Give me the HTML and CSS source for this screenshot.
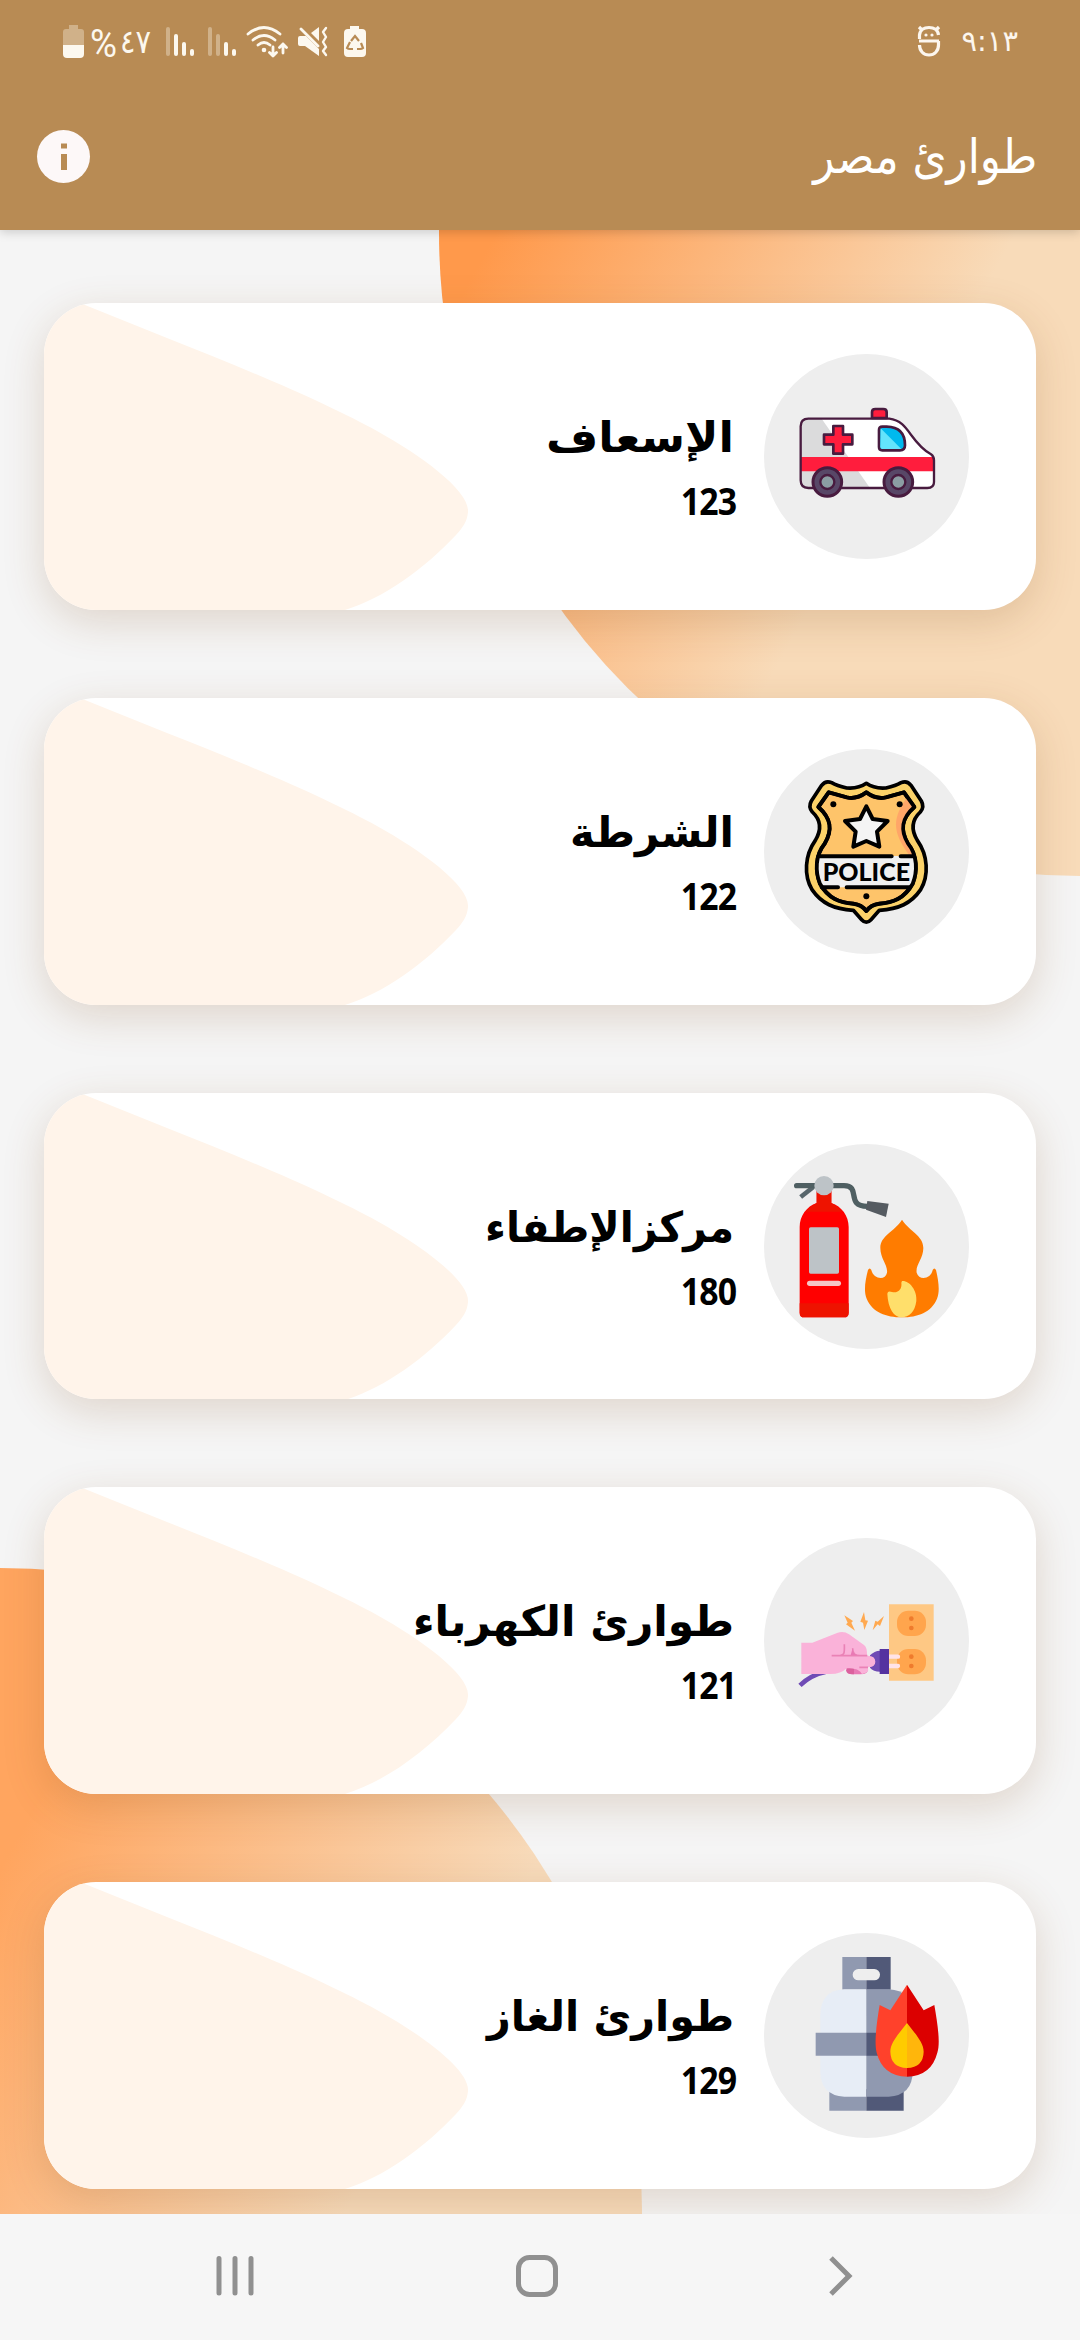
FILE: index.html
```html
<!DOCTYPE html>
<html lang="ar" dir="rtl">
<head>
<meta charset="utf-8">
<title>طوارئ مصر</title>
<link rel="stylesheet" href="styles.css">
</head>
<body>
<div class="screen">
  <header class="top">
    <div class="status">
      <div class="status-side">
        <span class="clock">٩:١٣</span>
        <svg class="face" width="24" height="32" viewBox="0 0 24 32" fill="none" stroke="#fcf6ee" stroke-width="3.2"><path d="M2.5 14V10C3 5 7 2.5 12 2.5s9 2.500 9.500 7.500M2 16h20M2.500 20c0 6 4 10 9.500 10s9.500-4 9.500-10v-4M2 2l4 4M22 2l-4 4"/><g fill="#fcf6ee" stroke="none"><circle cx="9" cy="10" r="1.600"/><circle cx="15" cy="10" r="1.600"/></g></svg>
      </div>
      <svg class="indicators" width="310" height="60" viewBox="60 11 310 60">
        <g fill="#fcf8ef">
          <path opacity=".35" d="M69 25h9v4h3q3 0 3 3v13H63V32q0-3 3-3h3z"/>
          <path d="M63 45h21v9q0 4-4 4H67q-4 0-4-4z"/>
          <rect opacity=".35" x="166" y="27" width="4" height="29" rx="2"/><rect x="174" y="34" width="4" height="22" rx="2"/><rect x="182" y="42" width="4" height="14" rx="2"/><rect x="190" y="49" width="4" height="7" rx="2"/>
          <rect opacity=".35" x="208" y="27" width="4" height="29" rx="2"/><rect opacity=".35" x="216" y="34" width="4" height="22" rx="2"/><rect x="224" y="42" width="4" height="14" rx="2"/><rect x="232" y="49" width="4" height="7" rx="2"/>
          <circle cx="264" cy="50" r="2.300"/>
          <path d="M298 38q0-2 2-2h6l13 13v7L305 46h-5q-2 0-2-2zM311 33l8-6v14z"/>
          <path d="M350 26h9v3h3q4 0 4 4v20q0 4-4 4h-14q-4 0-4-4V33q0-4 4-4h2z"/>
        </g>
        <g fill="none" stroke="#fcf8ef" stroke-width="2.800" stroke-linecap="round" stroke-linejoin="round">
          <path d="M248 34q16-13 32 0M253 40q11-9 22 0M258 45q6-5 12 0M273 47v9M269.500 52.500l3.500 3.500 3.500-3.500M283 53v-9M279.500 47.500l3.500-3.500 3.500 3.500M301 29l17 17"/>
          <path stroke-width="2.400" d="M326 28l-3 4 3 5-3 5 3 5-3 4 3 4"/>
        </g>
        <g fill="none" stroke="#b88b54" stroke-width="2.200"><path d="M351 41l4-5 4 5M361 43l2 5q-1 1-3 1h-3M353 49h-3q-2 0-3-1l3-6"/></g>
        <text class="percent" x="90" y="57" direction="ltr" textLength="27" lengthAdjust="spacingAndGlyphs">%</text>
        <text class="battery-text" x="120" y="53" direction="ltr" textLength="31" lengthAdjust="spacingAndGlyphs">٤٧</text>
      </svg>
    </div>
    <div class="bar">
      <h1 class="title">طوارئ مصر</h1>
      <svg class="info" width="53" height="53" viewBox="0 0 53 53"><circle cx="26.500" cy="26.500" r="26.500" fill="#fdf8f8"/><path fill="#b88b54" d="M24 13.500h6v5h-6zM24 24h6v16h-6z"/></svg>
    </div>
  </header>

  <main class="content">
    <svg class="backdrop" width="1080" height="1984" viewBox="0 230 1080 1984">
      <defs>
        <linearGradient id="warm-top" gradientUnits="userSpaceOnUse" x1="480" y1="262" x2="879" y2="482"><stop stop-color="#ff994b"/><stop offset="1" stop-color="#f8dbb9"/></linearGradient>
        <linearGradient id="warm-bottom" gradientUnits="userSpaceOnUse" x1="0" y1="1870" x2="410" y2="2096"><stop stop-color="#ffa55f"/><stop offset="1" stop-color="#f7dbbb"/></linearGradient>
      </defs>
      <circle cx="1082" cy="233" r="643" fill="url(#warm-top)"/>
      <circle cx="0" cy="2210" r="642" fill="url(#warm-bottom)"/>
    </svg>

    <section class="card">
      <svg class="petal" width="428" height="307" viewBox="0 0 428 307"><path d="M0 0H36L123 35C210 69 288 103 333 128C378 153 426 188 424 209C423 219 419 224 412 232C380 266 340 295 301 307H0z"/></svg>
      <div class="badge"><svg width="205" height="205" viewBox="72 71 615 615">
        <path d="M205 265H448C508 272 508 335 573 372Q582 378 582 390V455Q582 473 562 473H205Q182 473 182 450V288Q182 265 205 265z" fill="#fff"/>
        <path d="M205 265H245L390 473H205Q182 473 182 450V288Q182 265 205 265z" fill="#dbdbdc"/>
        <path d="M182 380H582V423H182z" fill="#ff1d3d"/>
        <path d="M205 265H448C508 272 508 335 573 372Q582 378 582 390V455Q582 473 562 473H205Q182 473 182 450V288Q182 265 205 265z" fill="none" stroke="#481b3f" stroke-width="7"/>
        <g stroke="#481b3f" stroke-width="8" stroke-linejoin="round"><path d="M396 263V245Q396 236 406 236H430Q440 236 440 245V263z" fill="#ff1d3d"/>
        <path d="M280 287H309V313H337V342H309V370H280V342H252V313H280z" fill="#ff1d3d"/>
        <path d="M427 289H440Q495 290 495 345Q495 360 480 360H427Q417 360 417 350V299Q417 289 427 289z" fill="#00b9ee"/></g>
        <path d="M422 294L484 356H427Q421 356 421 350z" fill="#63e4fc"/>
        <g fill="#584767" stroke="#481b3f" stroke-width="9"><circle cx="262" cy="455" r="43"/><circle cx="475" cy="455" r="43"/></g>
        <g fill="#8b9da3" stroke="#481b3f" stroke-width="7"><circle cx="262" cy="455" r="21"/><circle cx="475" cy="455" r="21"/></g>
      </svg></div>
      <div class="labels"><h2 class="name"><svg width="196" height="62"><text x="194" y="42" textLength="188" lengthAdjust="spacingAndGlyphs">الإسعاف</text></svg></h2><p class="number">123</p></div>
    </section>

    <section class="card">
      <svg class="petal" width="428" height="307" viewBox="0 0 428 307"><path d="M0 0H36L123 35C210 69 288 103 333 128C378 153 426 188 424 209C423 219 419 224 412 232C380 266 340 295 301 307H0z"/></svg>
      <div class="badge"><svg width="205" height="205" viewBox="72 56 615 615">
        <defs><clipPath id="shield"><path id="inner" d="M379 186Q350 208 320 201L266 186L235 230C275 265 278 300 254 340C225 375 226 425 240 460C265 505 300 517 340 520Q365 523 379 542Q393 523 418 520C458 517 493 505 518 460C532 425 533 375 504 340C480 300 483 265 523 230L492 186L438 201Q408 208 379 186z"/></clipPath></defs>
        <path d="M379 159Q355 176 320 173Q290 166 275 157Q257 149 245 165L214 212Q204 230 217 245C244 270 244 300 226 330C194 375 191 435 216 478C245 520 282 536 340 540L365 568Q379 583 393 568L418 540C476 536 513 520 542 478C567 435 564 375 532 330C514 300 514 270 541 245Q554 230 544 212L513 165Q501 149 483 157Q468 166 438 173Q403 176 379 159z" fill="#fbd269" stroke="#000" stroke-width="11" stroke-linejoin="round"/>
        <use href="#inner" fill="#fec46a" stroke="#000" stroke-width="12" stroke-linejoin="round"/>
        <g clip-path="url(#shield)"><path d="M510 190C450 265 455 310 520 390H540V190z" fill="#ffa668"/><path d="M230 377H530V471H230z" fill="#f0f0f0"/></g>
        <use href="#inner" fill="none" stroke="#000" stroke-width="11" stroke-linejoin="round"/>
        <path d="M235 378H455M482 378H520M245 471H294M320 471H510" stroke="#000" stroke-width="12" stroke-linecap="round"/>
        <path d="M379 228L398 266L443 272L411 304L418 349L379 332L340 349L347 304L315 272L360 266z" fill="#f4f4f4" stroke="#000" stroke-width="12" stroke-linejoin="round"/>
        <circle cx="280" cy="222" r="9"/><circle cx="479" cy="222" r="9"/><circle cx="379" cy="498" r="9"/>
        <text class="police" x="248" y="451" direction="ltr" textLength="262" lengthAdjust="spacingAndGlyphs">POLICE</text>
      </svg></div>
      <div class="labels"><h2 class="name"><svg width="176" height="62"><text x="174" y="42" textLength="164" lengthAdjust="spacingAndGlyphs">الشرطة</text></svg></h2><p class="number">122</p></div>
    </section>

    <section class="card">
      <svg class="petal" width="428" height="307" viewBox="0 0 428 307"><path d="M0 0H36L123 35C210 69 288 103 333 128C378 153 426 188 424 209C423 219 419 224 412 232C380 266 340 295 301 307H0z"/></svg>
      <div class="badge"><svg width="205" height="205" viewBox="72 71 615 615">
        <path d="M182 230L220 200" stroke="#58666b" stroke-width="14"/><path d="M170 196H312C365 197 315 258 382 258" fill="none" stroke="#4f5f62" stroke-width="16" stroke-linecap="round"/>
        <path d="M382 242L446 250L438 290L378 268z" fill="#555b61"/>
        <path d="M230 210H274V248C305 258 326 287 326 320V577Q326 591 312 591H192Q179 591 179 577V320C179 287 200 258 230 248z" fill="red"/>
        <path d="M230 210H274V248Q290 255 306 274H198Q214 255 230 248zM179 549H326V577Q326 591 312 591H192Q179 591 179 577z" fill="#ee1300"/>
        <circle cx="252" cy="196" r="29" fill="#bdc3c7"/><rect x="207" y="321" width="90" height="139" rx="5" fill="#bdc3c7"/><rect x="201" y="481" width="102" height="16" rx="8" fill="#f5c6c6"/>
        <path d="M486 298C510 335 550 345 550 383C550 415 526 434 530 457C537 482 573 476 578 449Q583 440 588 449C596 482 600 515 591 535C574 576 533 591 486 591C439 591 397 576 380 535C371 515 375 482 384 449Q389 440 394 449C400 476 436 482 441 457C444 434 421 415 421 383C421 345 463 335 486 298z" fill="#ff7c00"/>
        <path d="M486 482C508 480 532 510 529 542C525 575 507 591 485 591C462 591 444 565 442 520Q443 510 456 515C475 519 487 506 484 487z" fill="#ffdf6b"/>
      </svg></div>
      <div class="labels"><h2 class="name"><svg width="260" height="62"><text x="258" y="42" textLength="249" lengthAdjust="spacingAndGlyphs">مركزالإطفاء</text></svg></h2><p class="number">180</p></div>
    </section>

    <section class="card">
      <svg class="petal" width="428" height="307" viewBox="0 0 428 307"><path d="M0 0H36L123 35C210 69 288 103 333 128C378 153 426 188 424 209C423 219 419 224 412 232C380 266 340 295 301 307H0z"/></svg>
      <div class="badge"><svg width="205" height="205" viewBox="72 56 615 615">
        <path d="M447 255H581V484H447z" fill="#fec884"/><rect x="471" y="274" width="87" height="76" rx="34" fill="#ffa54d"/><rect x="471" y="389" width="87" height="76" rx="34" fill="#ffa54d"/>
        <g fill="#ef7b2d"><circle cx="514" cy="298" r="7"/><circle cx="514" cy="326" r="7"/><circle cx="514" cy="412" r="7"/><circle cx="514" cy="440" r="7"/></g>
        <path d="M444 412H474M444 440H474" stroke="#ffe3e8" stroke-width="13" stroke-linecap="round"/>
        <path d="M180 498Q212 467 256 458" fill="none" stroke="#6f4bb5" stroke-width="14"/>
        <path d="M390 408Q403 394 420 394V457Q400 457 390 445z" fill="#6f4bb5"/><path d="M419 389H447V464H419z" fill="#5432a0"/>
        <path d="M319 445H384Q386 465 361 465H336Q319 465 319 453z" fill="#e979b5"/><path d="M319 453Q320 444 342 445V465Q319 466 319 453z" fill="#db619e"/>
        <path d="M184 370H217L291 341Q311 334 327 345L372 377Q382 384 381 409Q406 408 406 427Q406 444 383 444Q390 460 366 464Q358 446 321 446Q303 464 271 464H184z" fill="#fab2d9"/>
        <path d="M275 409H382M313 375C314 403 314 408 294 409M338 387Q337 410 362 409M358 444H384" fill="none" stroke="#ea82b6" stroke-width="5"/><path d="M338 385Q336 404 354 408H332z" fill="#e979b5"/>
        <g fill="#ffa950"><path d="M313 288L339 305L334 310L345 334L318 315L323 310z"/><path d="M372 278L376 303L384 304L373 332L369 310L361 307z"/><path d="M432 290L420 320L413 315L398 333L406 304L413 307z"/></g>
      </svg></div>
      <div class="labels"><h2 class="name"><svg width="332" height="62"><text x="330" y="42" textLength="321" lengthAdjust="spacingAndGlyphs">طوارئ الكهرباء</text></svg></h2><p class="number">121</p></div>
    </section>

    <section class="card">
      <svg class="petal" width="428" height="307" viewBox="0 0 428 307"><path d="M0 0H36L123 35C210 69 288 103 333 128C378 153 426 188 424 209C423 219 419 224 412 232C380 266 340 295 301 307H0z"/></svg>
      <div class="badge"><svg width="205" height="205" viewBox="72 71 615 615">
        <path d="M307 143H379V241H307z" fill="#9099b0"/><path d="M379 143H452V241H379z" fill="#515978"/><rect x="338" y="179" width="82" height="34" rx="17" fill="#eee"/>
        <path d="M268 540H379V604H268z" fill="#9099b0"/><path d="M379 540H491V604H379z" fill="#515978"/>
        <path d="M379 240H313Q241 244 241 318V485Q241 558 313 562H379z" fill="#e7edf6"/><path d="M379 240H446Q518 244 518 318V485Q518 558 446 562H379z" fill="#9099b0"/>
        <path d="M227 370H379V439H227z" fill="#9099b0"/><path d="M379 370H530V439H379z" fill="#515978"/>
        <path d="M501 226L451 303L419 287C410 340 402 400 410 430Q428 500 501 502z" fill="#ff412b"/><path d="M501 226L551 303L583 287C592 340 602 400 592 430Q574 500 501 502z" fill="#dc0000"/>
        <path d="M501 341C475 375 451 400 451 427Q452 474 501 476z" fill="#ffcb00"/><path d="M501 341C527 375 551 400 551 427Q550 474 501 476z" fill="#ffb60b"/>
      </svg></div>
      <div class="labels"><h2 class="name"><svg width="260" height="62"><text x="258" y="42" textLength="247" lengthAdjust="spacingAndGlyphs">طوارئ الغاز</text></svg></h2><p class="number">129</p></div>
    </section>
  </main>

  <nav class="nav">
    <svg width="1080" height="126" viewBox="0 2214 1080 126" fill="none" stroke="#909090" stroke-width="5" stroke-linecap="round"><path d="M219 2258.500V2293M235 2258.500V2293M251 2258.500V2293"/><rect x="518.500" y="2257.500" width="37" height="37" rx="11"/><path d="M831 2258L849 2276L831 2294" stroke-linecap="butt"/></svg>
  </nav>
</div>
</body>
</html>
```
FILE: styles.css
```css
* { box-sizing: border-box; }
body { margin: 0; background: #f5f5f5; font-family: "DejaVu Sans", sans-serif; }
h1, h2, p { margin: 0; }
svg { display: block; overflow: visible; }
.screen { width: 1080px; height: 2340px; display: flex; flex-direction: column; overflow: hidden; }

.top { position: relative; z-index: 2; height: 230px; background: #b88b54; box-shadow: 0 2px 10px rgba(0, 0, 0, .18); }
.status { height: 82px; padding: 0 62px 0 60px; display: flex; justify-content: space-between; align-items: center; }
.status-side { display: flex; align-items: center; gap: 21px; }
.clock { color: #fcf6ee; font-size: 29px; line-height: 40px; direction: ltr; }
.battery-text { fill: #fcf8ef; font-size: 33px; }
.percent { fill: #fcf8ef; font: 38px Roboto, sans-serif; }
.bar { height: 148px; padding: 0 43px 0 37px; display: flex; justify-content: space-between; align-items: center; }
.title { color: #fff; font-weight: 400; font-size: 48px; line-height: 60px; transform: scaleX(.91); transform-origin: right; }

.content { position: relative; height: 1984px; padding: 73px 44px 0; display: flex; flex-direction: column; gap: 88px; overflow: hidden; background: #f5f5f5; }
.backdrop { position: absolute; left: 0; top: 0; }
.card { position: relative; flex: none; height: 306.800px; padding: 51px 67px 0 0; display: flex; gap: 28px; border-radius: 52px; background: #fff; box-shadow: 0 12px 42px rgba(130, 75, 25, .19); overflow: hidden; }
.petal { position: absolute; left: 0; top: 0; fill: #fff4ea; }
.badge { width: 205px; height: 205px; border-radius: 50%; background: #eee; flex: none; overflow: hidden; }
.labels { position: relative; padding-top: 56px; display: flex; flex-direction: column; align-items: flex-start; }
.name { height: 65px; font-size: 42px; font-weight: 700; }
.name text { font-size: 42px; fill: #000; }
.number { font: 700 38px/50px "Noto Sans", sans-serif; letter-spacing: -1px; transform: scaleX(.89); transform-origin: right; }
.police { font: 900 71px "Lato", sans-serif; fill: #000; }
.nav { height: 126px; background: #f6f6f6; }
```
